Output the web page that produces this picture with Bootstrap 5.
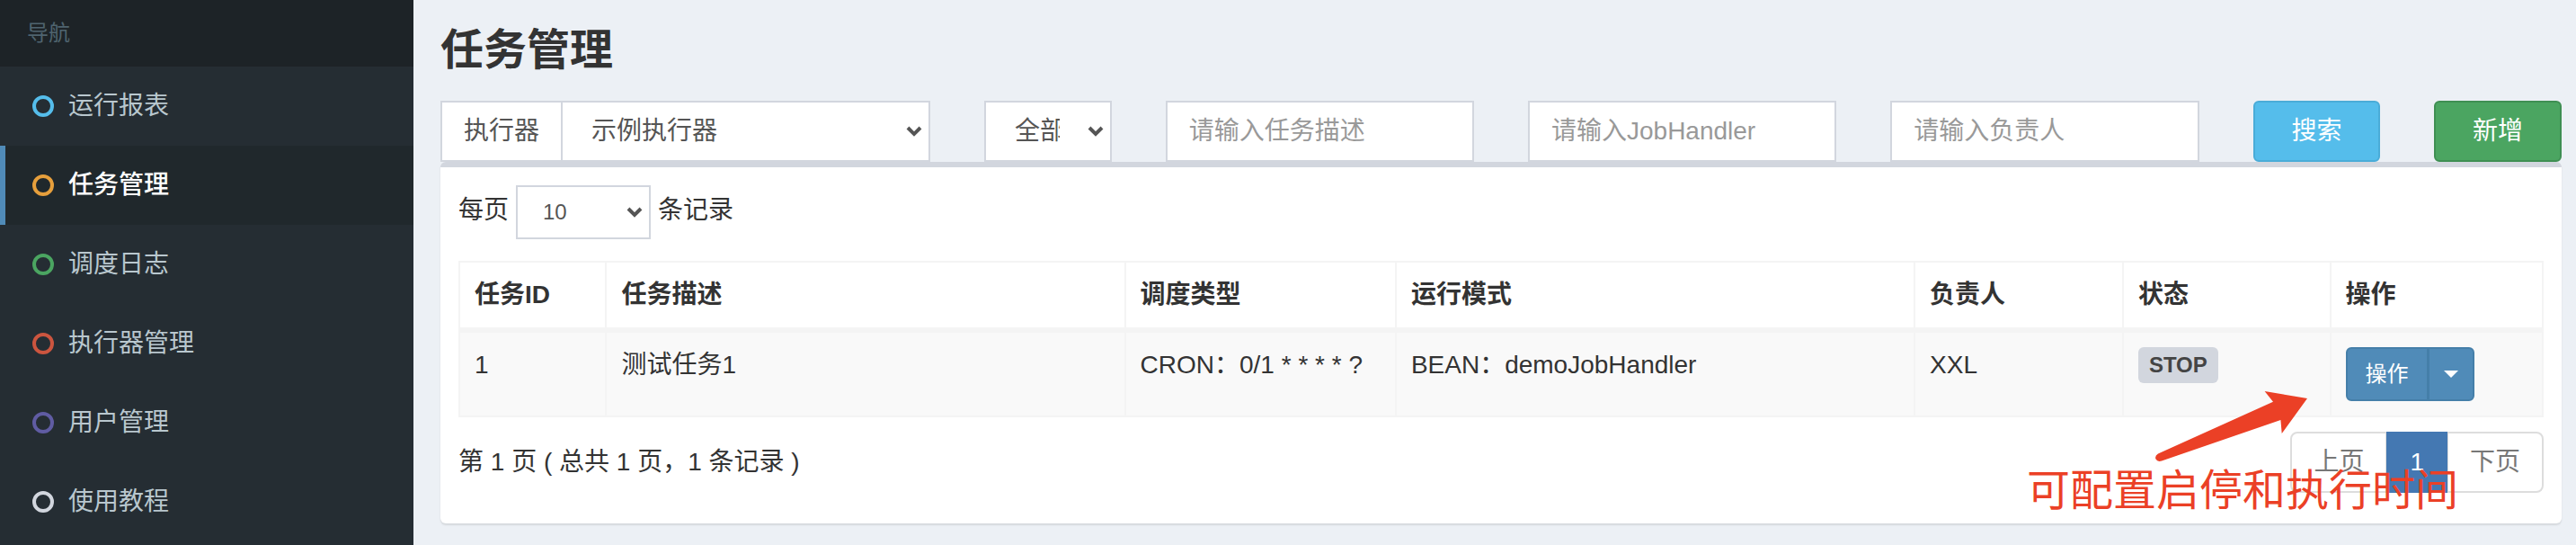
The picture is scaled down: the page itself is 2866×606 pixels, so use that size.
<!DOCTYPE html>
<html lang="zh-CN">
<head>
<meta charset="utf-8">
<meta name="viewport" content="width=device-width, initial-scale=1">
<title>任务管理</title>
<link href="https://cdn.jsdelivr.net/npm/bootstrap@5.3.0/dist/css/bootstrap.min.css" rel="stylesheet">
<style>
  body { font-family: "Liberation Sans", "Noto Sans CJK SC", sans-serif; font-size: 28px; line-height: 40px; color: #333; background: #ecf0f5; }

  /* Sidebar */
  .side-menu { flex: 0 0 460px; background: #252d33; }
  .side-title { padding: 17px 30px; font-size: 24px; color: #4f646f; background: #1d2327; }
  .side-link { display: flex; align-items: center; gap: 16px; padding: 24px 30px; border-left: 6px solid transparent; color: #b9c7ce; text-decoration: none; }
  .side-link.active { background: #20282c; border-left-color: #508bb8; color: #fff; font-weight: 500; }
  .ring { width: 24px; height: 24px; border: 4px solid; border-radius: 50%; }
  .ring-aqua { border-color: #55bdeb; }
  .ring-yellow { border-color: #e69f3c; }
  .ring-green { border-color: #4ba561; }
  .ring-red { border-color: #cc553f; }
  .ring-purple { border-color: #605ca3; }
  .ring-gray { border-color: #d2d6de; }

  /* Content */
  .page-main { min-width: 0; overflow: hidden; padding: 32px 16px 24px 30px; }
  .page-title { font-size: 48px; line-height: 48px; font-weight: 700; margin-bottom: 32px; }
  .filters { --bs-gutter-x: 60px; margin-right: -30px; }
  .field { height: 68px; padding: 12px 24px; font-size: 28px; line-height: 40px; color: #555; background-color: #fff; border: 2px solid #d2d6de; border-radius: 0; }
  .field::placeholder { color: #999; }
  .field-tag { padding: 12px 24px; border-right: 0; }
  .field-select { padding-left: 32px; padding-right: 56px; text-overflow: clip; background-image: url("data:image/svg+xml,%3csvg xmlns='http://www.w3.org/2000/svg' viewBox='0 0 18 14'%3e%3cpath fill='none' stroke='%23555' stroke-width='4' d='M2 3l7 7 7-7'/%3e%3c/svg%3e"); background-size: 18px 14px; background-position: right 7px center; }
  .field-small { width: 150px; height: 60px; padding: 8px 40px 8px 28px; font-size: 24px; }
  .btn-tool { height: 68px; padding: 12px; font-size: 28px; line-height: 40px; border-width: 2px; border-radius: 6px; color: #fff; }
  .btn-search { background: #55bdeb; border-color: #4aacd8; }
  .btn-add { background: #4ba561; border-color: #3f8f53; }

  .panel { position: relative; background: #fff; border-top: 6px solid #d2d6de; border-radius: 6px; box-shadow: 0 2px 2px rgba(0,0,0,.1); padding: 20px 20px 34px; }
  .jobs { table-layout: fixed; margin: 0; --bs-table-striped-bg: #f9f9f9; --bs-table-striped-color: #333; --bs-table-color: #333; border-color: #f4f4f4; }
  .jobs th, .jobs td { padding: 16px; border: 2px solid #f4f4f4; vertical-align: top; }
  .jobs thead th { border-bottom-width: 6px; }
  .state { display: block; width: max-content; padding: 0 12px; font-size: 24px; font-weight: 700; line-height: 40px; color: #444; background: #d2d6de; border-radius: 6px; }
  .btn-op { height: 60px; padding: 8px 20px; font-size: 24px; line-height: 40px; color: #fff; background: #508bb8; border: 2px solid #457fa9; border-radius: 6px; }
  .btn-op.dropdown-toggle { padding: 8px 16px; }
  .btn-op.dropdown-toggle::after { margin: 0; vertical-align: 4px; border-top: 8px solid; border-left: 8px solid transparent; border-right: 8px solid transparent; }
  .pager { --bs-pagination-color: #777; --bs-pagination-bg: #fff; --bs-pagination-border-color: #ddd; --bs-pagination-border-width: 2px; --bs-pagination-border-radius: 8px; --bs-pagination-font-size: 28px; --bs-pagination-padding-x: 24px; --bs-pagination-padding-y: 12px; --bs-pagination-active-bg: #4478b2; --bs-pagination-active-border-color: #4478b2; margin: 0; }

  /* Handwritten note over the table */
  .note { position: absolute; z-index: 5; right: 115px; top: 248px; color: #eb4026; font-size: 48px; line-height: 64px; pointer-events: none; }
  .note svg { display: block; width: 172px; height: 80px; margin-left: 142px; }
</style>
</head>
<body>
<div class="d-flex min-vh-100">
  <nav class="side-menu" aria-label="导航">
    <div class="side-title">导航</div>
    <ul class="list-unstyled m-0">
      <li><a class="side-link" href="#"><span class="ring ring-aqua"></span>运行报表</a></li>
      <li><a class="side-link active" href="#" aria-current="page"><span class="ring ring-yellow"></span>任务管理</a></li>
      <li><a class="side-link" href="#"><span class="ring ring-green"></span>调度日志</a></li>
      <li><a class="side-link" href="#"><span class="ring ring-red"></span>执行器管理</a></li>
      <li><a class="side-link" href="#"><span class="ring ring-purple"></span>用户管理</a></li>
      <li><a class="side-link" href="#"><span class="ring ring-gray"></span>使用教程</a></li>
    </ul>
  </nav>

  <main class="page-main flex-grow-1">
    <h1 class="page-title">任务管理</h1>

    <form class="row filters">
      <div class="col-3">
        <div class="input-group flex-nowrap">
          <label class="input-group-text field field-tag" for="group">执行器</label>
          <select class="form-select field field-select m-0" id="group"><option>示例执行器</option></select>
        </div>
      </div>
      <div class="col-1">
        <select class="form-select field field-select" aria-label="状态"><option>全部</option></select>
      </div>
      <div class="col-2"><input class="form-control field" type="text" placeholder="请输入任务描述" aria-label="任务描述"></div>
      <div class="col-2"><input class="form-control field" type="text" placeholder="请输入JobHandler" aria-label="JobHandler"></div>
      <div class="col-2"><input class="form-control field" type="text" placeholder="请输入负责人" aria-label="负责人"></div>
      <div class="col-1"><button class="btn btn-tool btn-search w-100" type="button">搜索</button></div>
      <div class="col-1"><button class="btn btn-tool btn-add w-100" type="button">新增</button></div>
    </form>

    <section class="panel">
      <div class="d-flex gap-2 mb-4">
        <label class="pt-2" for="size">每页</label>
        <select class="form-select field field-select field-small" id="size"><option>10</option></select>
        <span class="pt-2">条记录</span>
      </div>

      <table class="table table-striped jobs">
        <colgroup>
          <col style="width:7.05%"><col style="width:24.9%"><col style="width:13%"><col style="width:24.9%"><col style="width:10%"><col style="width:9.95%"><col>
        </colgroup>
        <thead>
          <tr><th>任务ID</th><th>任务描述</th><th>调度类型</th><th>运行模式</th><th>负责人</th><th>状态</th><th>操作</th></tr>
        </thead>
        <tbody>
          <tr>
            <td>1</td><td>测试任务1</td><td>CRON：0/1 * * * * ?</td><td>BEAN：demoJobHandler</td><td>XXL</td>
            <td><span class="state">STOP</span></td>
            <td>
              <div class="d-flex">
                <div class="btn-group">
                  <button class="btn btn-op" type="button">操作</button>
                  <button class="btn btn-op dropdown-toggle dropdown-toggle-split" type="button" data-bs-toggle="dropdown" aria-expanded="false" aria-label="更多操作"></button>
                </div>
              </div>
            </td>
          </tr>
        </tbody>
      </table>

      <div class="d-flex justify-content-between align-items-center mt-3">
        <div>第 1 页 ( 总共 1 页，1 条记录 )</div>
        <ul class="pagination pager">
          <li class="page-item"><a class="page-link" href="#">上页</a></li>
          <li class="page-item active"><a class="page-link" href="#" aria-current="page">1</a></li>
          <li class="page-item"><a class="page-link" href="#">下页</a></li>
        </ul>
      </div>

      <div class="note">
        <svg viewBox="2396 434 172 80" aria-hidden="true"><path fill="#eb4026" d="M2566 443 2518.600 435 2528 446.700 2400 504.500Q2396 507 2397.500 510.500 2399.500 514 2404 512.500L2536.400 467 2537.700 482Z"/></svg>
        可配置启停和执行时间
      </div>
    </section>
  </main>
</div>
<script src="https://cdn.jsdelivr.net/npm/bootstrap@5.3.0/dist/js/bootstrap.bundle.min.js"></script>
</body>
</html>
